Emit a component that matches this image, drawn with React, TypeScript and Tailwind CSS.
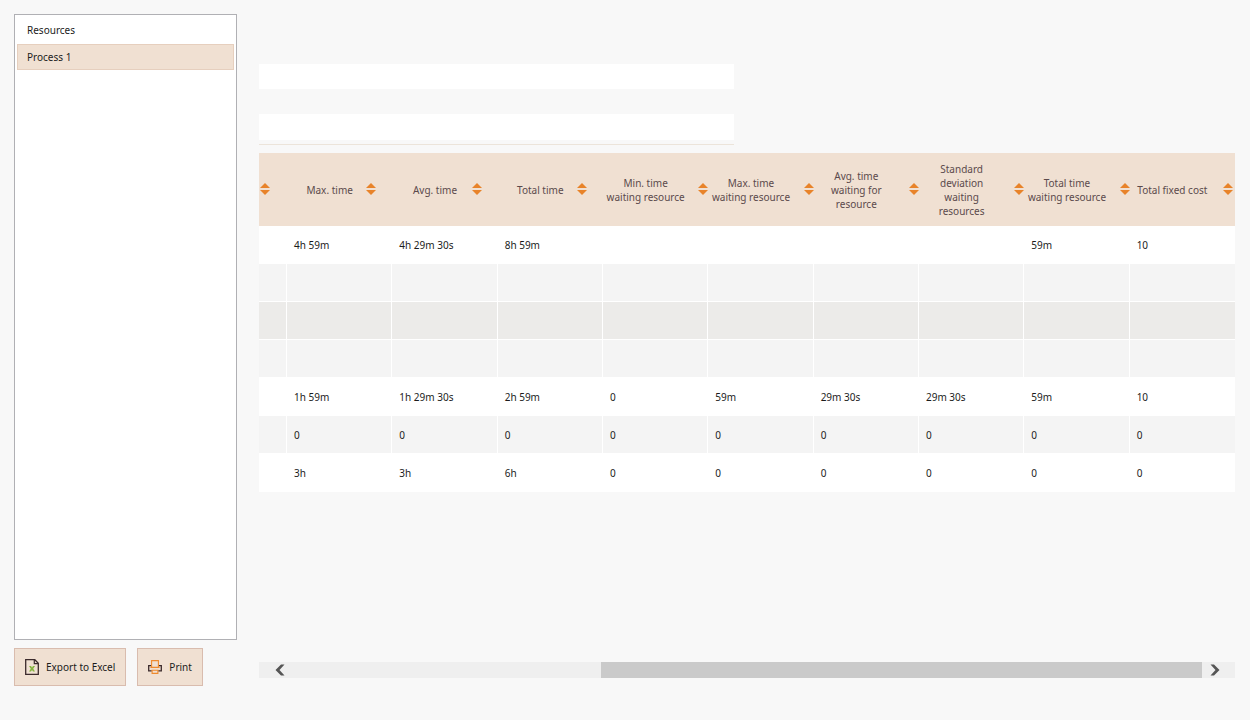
import { useState } from "react";
import clsx from "clsx";

type Layout = "normal" | "wide" | "last";

interface Column {
  label: string;
  layout: Layout;
}

const COLUMNS: Column[] = [
  { label: "Max. time", layout: "normal" },
  { label: "Avg. time", layout: "normal" },
  { label: "Total time", layout: "normal" },
  { label: "Min. time waiting resource", layout: "wide" },
  { label: "Max. time waiting resource", layout: "wide" },
  { label: "Avg. time waiting for resource", layout: "wide" },
  { label: "Standard deviation waiting resources", layout: "wide" },
  { label: "Total time waiting resource", layout: "wide" },
  { label: "Total fixed cost", layout: "last" },
];

const ROWS: { bg: string; cells: string[] }[] = [
  { bg: "bg-white", cells: ["4h 59m", "4h 29m 30s", "8h 59m", "", "", "", "", "59m", "10"] },
  { bg: "bg-[#f4f4f4]", cells: ["", "", "", "", "", "", "", "", ""] },
  { bg: "bg-[#ecebe9]", cells: ["", "", "", "", "", "", "", "", ""] },
  { bg: "bg-[#f4f4f4]", cells: ["", "", "", "", "", "", "", "", ""] },
  { bg: "bg-white", cells: ["1h 59m", "1h 29m 30s", "2h 59m", "0", "59m", "29m 30s", "29m 30s", "59m", "10"] },
  { bg: "bg-[#f4f4f4]", cells: ["0", "0", "0", "0", "0", "0", "0", "0", "0"] },
  { bg: "bg-white", cells: ["3h", "3h", "6h", "0", "0", "0", "0", "0", "0"] },
];

const VIEWS = ["Resources", "Process 1"];

function SortButton({ label }: { label: string }) {
  return (
    <button type="button" aria-label={label} className="shrink-0 cursor-pointer pb-0.5">
      <svg width="10" height="12" viewBox="0 0 10 12" fill="#e8832a" className="block">
        <path d="M5 0 L10 5 H0 Z" />
        <path d="M0 7 H10 L5 12 Z" />
      </svg>
    </button>
  );
}

function ExcelIcon() {
  return (
    <svg width="14" height="16" viewBox="0 0 14 16" fill="none" className="shrink-0">
      <path d="M0.7 0.7 H9.8 L13.3 4.2 V15.3 H0.7 Z" stroke="#3b2a2c" strokeWidth="1.3" />
      <path d="M9.3 0.7 V4.6 H13.3" stroke="#3b2a2c" strokeWidth="1.2" />
      <path d="M4 7 H6 L7 8.5 L8 7 H10 L8.2 9.7 L10 12.5 H8 L7 10.9 L6 12.5 H4 L5.8 9.7 Z" fill="#86b440" />
    </svg>
  );
}

function PrintIcon() {
  return (
    <svg width="14" height="14" viewBox="0 0 14 14" fill="none" className="shrink-0">
      <path d="M3.4 5.6 H0.7 V10.9 H3.8 M10.2 10.9 H13.3 V5.6 H10.6" stroke="#3b2a2c" strokeWidth="1.3" />
      <path d="M3.6 6.8 V0.6 H10.4 V6.8 M2.4 7.4 H11.6" stroke="#ee8a2e" strokeWidth="1.1" />
      <path d="M4.1 10.2 H9.9 V13.4 H4.1 Z" stroke="#ee8a2e" strokeWidth="1.1" />
    </svg>
  );
}

function HeaderCell({ label, layout }: Column) {
  return (
    <th scope="col" className="p-0 font-normal align-middle">
      <div
        className={clsx(
          "flex items-center",
          layout === "normal" && "pl-1.5 pr-4",
          layout === "wide" && "pl-0.5",
          layout === "last" && "px-0.5",
        )}
      >
        <span
          className={clsx(
            "flex-1 text-center",
            layout === "wide" && "mr-3 px-px",
            layout === "last" && "mr-2.5 whitespace-nowrap",
          )}
        >
          {label}
        </span>
        <SortButton label={`Sort by ${label}`} />
      </div>
    </th>
  );
}

export default function App() {
  const [view, setView] = useState("Process 1");

  return (
    <div className="flex min-h-screen gap-[22px] bg-[#f8f8f8] pt-3.5 pr-[15px] pb-[34px] pl-3.5 font-['Noto_Sans',sans-serif] text-[10px] leading-[14px] text-[#1c1c1c]">
      <aside className="flex w-[223px] shrink-0 flex-col gap-2">
        <ul className="flex flex-1 flex-col gap-px border border-[#b0b0b4] bg-white p-0.5">
          {VIEWS.map((name) => (
            <li key={name}>
              <button
                type="button"
                onClick={() => setView(name)}
                className={clsx(
                  "block h-[26px] w-full cursor-pointer border px-[9px] text-left",
                  view === name ? "border-[#e6cfbe] bg-[#f0e0d2]" : "border-transparent",
                )}
              >
                {name}
              </button>
            </li>
          ))}
        </ul>
        <div className="flex gap-[11px]">
          <button
            type="button"
            className="flex h-[38px] cursor-pointer items-center gap-[7px] border border-[#d9bcae] bg-[#f0e0d2] px-2.5 whitespace-nowrap"
          >
            <ExcelIcon />
            Export to Excel
          </button>
          <button
            type="button"
            className="flex h-[38px] cursor-pointer items-center gap-[7px] border border-[#d9bcae] bg-[#f0e0d2] px-2.5"
          >
            <PrintIcon />
            Print
          </button>
        </div>
      </aside>

      <main className="flex min-w-0 flex-1 flex-col pt-[50px] pb-2">
        <div className="flex max-w-[475px] flex-col gap-[25px] border-b border-[#ece4da] pb-1">
          <input type="text" aria-label="Name" className="h-[25px] w-full bg-white px-2 outline-none" />
          <input type="text" aria-label="Description" className="h-[26px] w-full bg-white px-2 outline-none" />
        </div>

        <div className="mt-2 flex-1">
          <table className="w-full table-fixed border-separate border-spacing-0">
            <colgroup>
              <col className="w-7" />
              {COLUMNS.map((c) => (
                <col key={c.label} />
              ))}
            </colgroup>
            <thead>
              <tr className="h-[73px] bg-[#f0e0d2] text-[#5b4a4c]">
                <td className="p-0 align-middle">
                  <div className="flex pl-px">
                    <SortButton label="Sort" />
                  </div>
                </td>
                {COLUMNS.map((c) => (
                  <HeaderCell key={c.label} {...c} />
                ))}
              </tr>
            </thead>
            <tbody>
              {ROWS.map((row, i) => (
                <tr key={i} className={clsx("h-[38px]", row.bg)}>
                  <td className="border-r border-b border-white p-0" />
                  {row.cells.map((cell, j) => (
                    <td
                      key={j}
                      className="border-r border-b border-white py-0 pr-0 pl-[7px] align-middle whitespace-nowrap last:border-r-0"
                    >
                      {cell}
                    </td>
                  ))}
                </tr>
              ))}
            </tbody>
          </table>
        </div>

        <div className="flex h-4 bg-[#efefef]">
          <button
            type="button"
            aria-label="Scroll left"
            className="flex w-[41px] cursor-pointer items-center justify-center"
          >
            <svg width="10" height="12" viewBox="0 0 10 12" fill="#555">
              <path d="M6 0.5 H9.5 L4.5 6 L9.5 11.5 H6 L0.5 6 Z" />
            </svg>
          </button>
          <div className="flex flex-1 justify-end">
            <div className="w-2/3 bg-[#cacaca]" />
          </div>
          <button
            type="button"
            aria-label="Scroll right"
            className="flex w-[33px] cursor-pointer items-center pl-2"
          >
            <svg width="10" height="12" viewBox="0 0 10 12" fill="#555">
              <path d="M4 0.5 H0.5 L5.5 6 L0.5 11.5 H4 L9.5 6 Z" />
            </svg>
          </button>
        </div>
      </main>
    </div>
  );
}
